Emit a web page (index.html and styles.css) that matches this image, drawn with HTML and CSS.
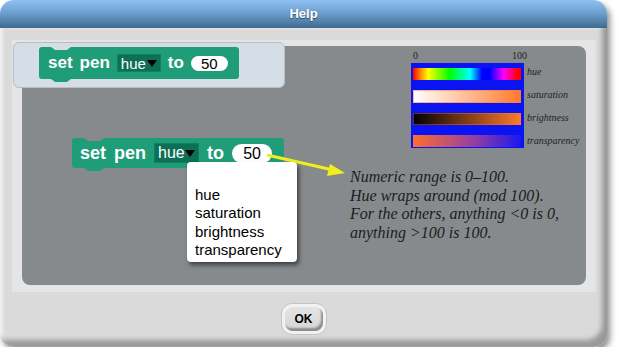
FILE: index.html
```html
<!DOCTYPE html>
<html lang="en">

<head>
    <meta charset="UTF-8">
    <title>Help</title>
    <link rel="stylesheet" href="styles.css">
</head>

<body>
    <div class="dialog">
        <div class="titlebar">Help</div>
        <div class="dialog-body">
            <div class="frame">
                <!-- palette sample in the corner -->
                <div class="scripts">
                    <div class="block">
                        <span>set</span>
                        <span>pen</span>
                        <span class="dropdown">hue<i class="tri"></i></span>
                        <span>to</span>
                        <span class="slot">50</span>
                    </div>
                </div>

                <div class="panel">
                    <div class="block block-lg">
                        <span>set</span>
                        <span>pen</span>
                        <span class="dropdown">hue<i class="tri"></i></span>
                        <span>to</span>
                        <span class="slot">50</span>
                    </div>

                    <ul class="menu">
                        <li>hue</li>
                        <li>saturation</li>
                        <li>brightness</li>
                        <li>transparency</li>
                    </ul>

                    <svg class="arrow" width="564" height="239" viewBox="0 0 564 239">
                        <line x1="245" y1="109" x2="311" y2="124" stroke="#f2ee1e" stroke-width="3" />
                        <polygon points="323,127 308,118 305,130" fill="#f2ee1e" />
                    </svg>

                    <p class="note">
                        Numeric range is 0–100.<br>
                        Hue wraps around (mod 100).<br>
                        For the others, anything &lt;0 is 0,<br>
                        anything &gt;100 is 100.
                    </p>

                    <div class="chart">
                        <div class="axis"><span>0</span><span>100</span></div>
                        <div class="chart-main">
                            <div class="bars">
                                <div class="bar bar-hue"></div>
                                <div class="bar bar-sat"></div>
                                <div class="bar bar-bri"></div>
                                <div class="bar bar-tra"></div>
                            </div>
                            <div class="bar-labels">
                                <span>hue</span>
                                <span>saturation</span>
                                <span>brightness</span>
                                <span>transparency</span>
                            </div>
                        </div>
                    </div>
                </div>
            </div>

            <div class="buttons">
                <button class="ok-btn"><span>OK</span></button>
            </div>
        </div>
    </div>
</body>

</html>
```

FILE: styles.css
```css
html,
body {
    margin: 0;
    background: #fff;
    font-family: 'Liberation Sans', Arial, sans-serif;
}

.dialog {
    width: 607px;
    height: 347px;
    border-radius: 14px;
    box-shadow: 3px 4px 6px rgba(0, 0, 0, 0.45);
    display: flex;
    flex-direction: column;
}

.titlebar {
    height: 28px;
    line-height: 28px;
    text-align: center;
    color: #fff;
    font-weight: bold;
    font-size: 13px;
    text-shadow: 0 1px 1px rgba(0, 0, 0, 0.45);
    background: linear-gradient(#8fc0f2, #6a9ccb 50%, #3e6a90);
    border-radius: 14px 14px 0 0;
}

.dialog-body {
    flex: 1;
    background: #dadada;
    border-radius: 0 0 14px 14px;
    padding: 12px 11px 0 12px;
    box-shadow: inset -7px -9px 5px -2px rgba(0, 0, 0, 0.3), inset 3px 0 3px rgba(255, 255, 255, 0.6);
}

.frame {
    position: relative;
    height: 239px;
    padding: 6px 10px 7px 10px;
    background: #e5e5e7;
}

.panel {
    position: relative;
    height: 239px;
    background: #868a8c;
    border-radius: 8px;
}

.scripts {
    position: absolute;
    top: 2px;
    left: 1px;
    z-index: 2;
    width: 245px;
    height: 40px;
    padding: 4px 0 0 25px;
    background: #d5dee6;
    border: 1px solid #b7bec4;
    border-radius: 6px;
}

/* command block */
.block {
    --bg: #d5dee6;
    position: relative;
    display: inline-flex;
    align-items: center;
    gap: 7px;
    height: 32px;
    padding: 0 11px 0 9px;
    background: #1f9d78;
    border-radius: 3px;
    color: #fff;
    font-weight: bold;
    font-size: 17px;
}

.block::before {
    content: "";
    position: absolute;
    top: 0;
    left: 12px;
    width: 20px;
    height: 3px;
    background: var(--bg);
    clip-path: polygon(0 0, 100% 0, 80% 100%, 20% 100%);
}

.block::after {
    content: "";
    position: absolute;
    top: 100%;
    left: 12px;
    width: 20px;
    height: 3px;
    background: #1f9d78;
    clip-path: polygon(0 0, 100% 0, 80% 100%, 20% 100%);
}

.dropdown {
    display: flex;
    align-items: center;
    justify-content: space-between;
    box-sizing: border-box;
    width: 44px;
    height: 18px;
    padding: 0 3px 0 3px;
    background: #0d6f55;
    border: 1px solid #137f62;
    font-weight: normal;
    font-size: 15px;
}

.tri {
    width: 0;
    height: 0;
    border-left: 5px solid transparent;
    border-right: 5px solid transparent;
    border-top: 7px solid #000;
}

.slot {
    width: 37px;
    height: 15px;
    line-height: 16px;
    text-align: center;
    background: #fff;
    color: #000;
    border-radius: 8px;
    font-weight: normal;
    font-size: 15px;
}

.block-lg {
    --bg: #868a8c;
    position: absolute;
    top: 92px;
    left: 50px;
    height: 30px;
    padding: 0 12px 0 8px;
    font-size: 18px;
    gap: 8px;
}

.block-lg::before,
.block-lg::after {
    left: 12px;
}

.block-lg .dropdown {
    width: 45px;
    height: 20px;
    font-size: 16px;
}

.block-lg .slot {
    width: 40px;
    height: 19px;
    line-height: 20px;
    border-radius: 10px;
    font-size: 16px;
}

.menu {
    position: absolute;
    top: 116px;
    left: 165px;
    z-index: 3;
    box-sizing: border-box;
    width: 110px;
    height: 100px;
    margin: 0;
    padding: 24px 0 0 8px;
    list-style: none;
    background: #fff;
    border-radius: 4px;
    box-shadow: 2px 3px 4px rgba(0, 0, 0, 0.55);
    font-size: 15px;
    line-height: 18.4px;
    color: #000;
}

.arrow {
    position: absolute;
    top: 0;
    left: 0;
    z-index: 2;
    pointer-events: none;
}

.note {
    position: absolute;
    top: 122px;
    left: 328px;
    margin: 0;
    font-family: 'Liberation Serif', 'Times New Roman', serif;
    font-style: italic;
    font-size: 16px;
    line-height: 18.7px;
    color: #1c1c1c;
}

/* colour ranges */
.chart {
    position: absolute;
    top: 4px;
    left: 389px;
    font-family: 'Liberation Serif', 'Times New Roman', serif;
    font-size: 10px;
    color: #222;
}

.axis {
    display: flex;
    justify-content: space-between;
    width: 116px;
    height: 13px;
    line-height: 12px;
    padding-left: 2px;
    box-sizing: border-box;
}

.chart-main {
    display: flex;
}

.bars {
    display: flex;
    flex-direction: column;
    gap: 10px;
    width: 108px;
    height: 79px;
    padding: 5px 3px 1px 2px;
    background: #0a14f2;
}

.bar {
    height: 12px;
}

.bar-sat,
.bar-bri {
    height: 13px;
}

.bar-hue {
    background: linear-gradient(to right, #f00 0%, #ff8a00 7%, #ff0 14%, #0f0 34%, #0ff 53%, #00f 64%, #00f 71%, #f0f 84%, #f00 97%);
}

.bar-sat {
    background: linear-gradient(to right, #fff, #ff7a2c);
    box-shadow: inset 0 0 0 1px rgba(255, 120, 40, 0.5);
}

.bar-bri {
    background: linear-gradient(to right, #000, #ff7a2c);
    box-shadow: inset 0 0 0 1px rgba(255, 120, 40, 0.4);
}

.bar-tra {
    background: linear-gradient(to right, #ff6e2c, #9840a0 55%, #1a18ee);
}

.bar-labels {
    display: flex;
    flex-direction: column;
    gap: 11px;
    padding: 3px 0 0 3px;
    font-style: italic;
    line-height: 12px;
}

.buttons {
    display: flex;
    justify-content: center;
    padding-top: 11px;
    padding-right: 1px;
}

.ok-btn {
    width: 46px;
    height: 32px;
    padding: 3px;
    border: 1px solid #c4c4c4;
    border-radius: 11px;
    background: #f2f2f2;
    font-family: 'Liberation Sans', Arial, sans-serif;
}

.ok-btn span {
    display: block;
    height: 100%;
    line-height: 24px;
    border-radius: 8px;
    background: linear-gradient(#e4e4e4, #d6d6d6);
    box-shadow: inset -2px -3px 2px rgba(0, 0, 0, 0.35);
    font-weight: bold;
    font-size: 12px;
    color: #000;
}
```
